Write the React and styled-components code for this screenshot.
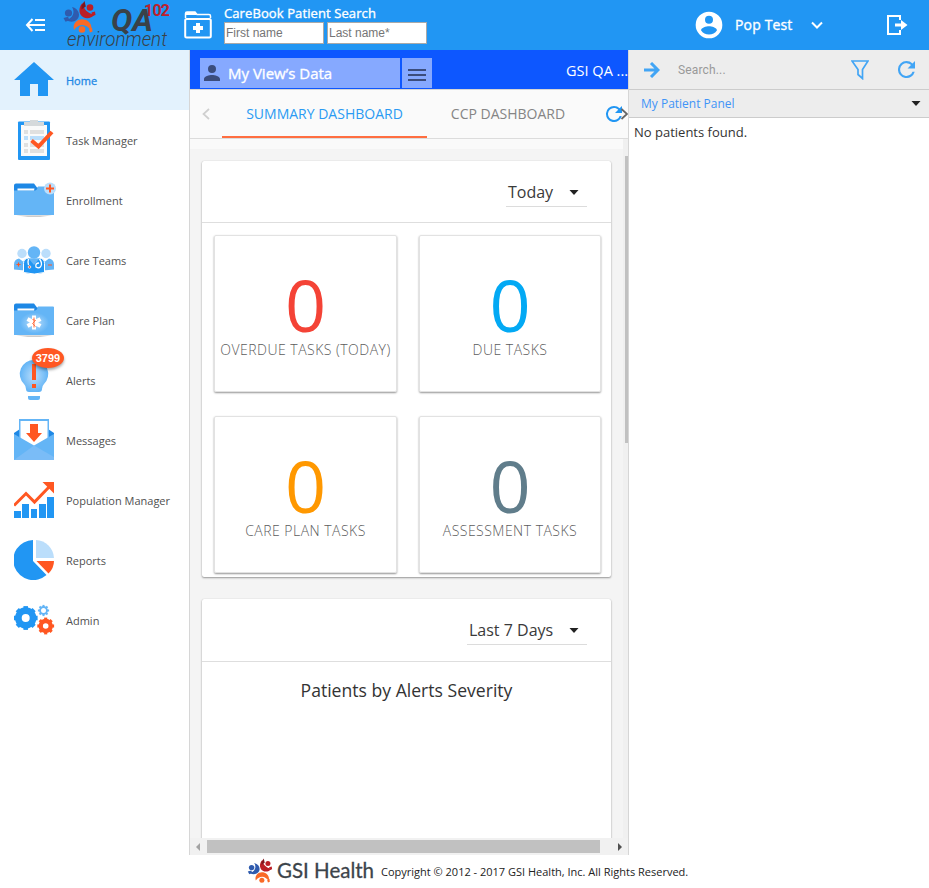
import React from 'react';
import styled, { createGlobalStyle } from 'styled-components';

const Global = createGlobalStyle`
  * { box-sizing: border-box; }
  body { margin: 0; background: #fff; font-family: "Open Sans", "Noto Sans", sans-serif; color: #333; }
  svg { display: block; flex: none; }
`;

const Page = styled.div`
  width: 929px;
  height: 888px;
  display: flex;
  flex-direction: column;
  overflow: hidden;
  white-space: nowrap;
`;

/* Header */
const Header = styled.header`
  height: 50px;
  flex: none;
  background: #2196f3;
  color: #fff;
  display: flex;
  align-items: center;
`;
const BackIcon = styled.svg`
  margin-left: 25px;
`;
const EnvLogo = styled.svg`
  margin-left: 17px;
`;
const FolderIcon = styled.svg`
  margin-left: 9px;
`;
const SearchBlock = styled.div`
  margin-left: 12px;
  height: 50px;
  padding-top: 5px;
`;
const SearchTitle = styled.div`
  font-size: 13px;
  -webkit-text-stroke: 0.35px currentColor;
  letter-spacing: 0.1px;
  line-height: 17px;
`;
const Fields = styled.div`
  display: flex;
  gap: 3px;
`;
const Field = styled.input`
  width: 100px;
  height: 22px;
  margin: 0;
  padding: 0 1px;
  border: 1px solid #a9a9a9;
  border-radius: 0;
  background: #fff;
  font: 12px "Liberation Sans", Arial, sans-serif;
  outline: none;
  &::placeholder { color: #757575; opacity: 1; }
`;
const UserMenu = styled.div`
  margin-left: auto;
  margin-right: 63px;
  display: flex;
  align-items: center;
  font-size: 14px;
  -webkit-text-stroke: 0.35px currentColor;
`;
const UserName = styled.span`
  width: 75px;
  margin-left: 12px;
  padding-bottom: 1px;
  letter-spacing: 0.15px;
`;
const LogoutIcon = styled.svg`
  margin-right: 21px;
`;

/* Body columns */
const Body = styled.div`
  height: 805px;
  flex: none;
  display: flex;
`;
const Sidebar = styled.nav`
  width: 190px;
  flex: none;
  border-right: 1px solid #d6d6d6;
`;
const NavItem = styled.div`
  height: 60px;
  padding-left: 14px;
  display: flex;
  align-items: center;
  gap: 12px;
  background: ${(p) => (p.$active ? '#e3f2fd' : '#fff')};
  color: ${(p) => (p.$active ? '#1e88e5' : '#505050')};
  font-size: 11px;
`;
const NavLabel = styled.span`
  padding-top: 1px;
  -webkit-text-stroke: ${(p) => (p.$active ? '0.3px currentColor' : '0')};
`;
const IconHolder = styled.div`
  position: relative;
  width: 40px;
  height: 44px;
`;
const Badge = styled.div`
  position: absolute;
  left: 18px;
  top: -10px;
  width: 32px;
  height: 20px;
  border-radius: 50%;
  background: #ff5722;
  color: #fff;
  font: bold 11px/20px "Liberation Sans", Arial, sans-serif;
  text-align: center;
  box-shadow: 0 2px 3px rgba(0, 0, 0, 0.35);
`;

/* Dashboard column */
const Main = styled.main`
  width: 439px;
  flex: none;
  border-right: 1px solid #d6d6d6;
  display: flex;
  flex-direction: column;
  background: #f4f4f4;
`;
const ViewBar = styled.div`
  height: 40px;
  flex: none;
  padding: 8px 0 0 10px;
  background: #0d57ff;
  border-bottom: 1px solid #d6d6d6;
  display: flex;
  align-items: flex-start;
  color: #fff;
`;
const ViewButton = styled.div`
  width: ${(p) => p.$w}px;
  height: 30px;
  margin-right: 2px;
  padding-left: ${(p) => p.$pad}px;
  background: #86a9ff;
  display: flex;
  align-items: center;
  font-size: 15px;
  -webkit-text-stroke: 0.35px currentColor;
  gap: 8px;
`;
const OrgName = styled.div`
  margin-left: auto;
  font-size: 14.5px;
  line-height: 26px;
`;
const Tabs = styled.div`
  height: 49px;
  flex: none;
  padding-left: 12px;
  display: flex;
  background: #fafafa;
  border-bottom: 1px solid #dcdcdc;
  align-items: center;
`;
const Tab = styled.div`
  height: 48px;
  width: ${(p) => p.$w}px;
  line-height: 48px;
  text-align: center;
  font-size: 14px;
  color: ${(p) => (p.$active ? '#2b9af3' : '#858585')};
  border-bottom: ${(p) => (p.$active ? '2px solid #ff6e40' : '0')};
`;
const Scroller = styled.div`
  height: 699px;
  display: flex;
`;
const Content = styled.div`
  width: 433px;
  overflow: hidden;
  border-top: 10px solid #fafafa;
  padding: 12px 12px 0;
`;
const VTrack = styled.div`
  width: 5px;
  background: #f0f0f0;
  padding: 17px 0 0 2px;
`;
const VThumb = styled.div`
  height: 287px;
  background: #c1c1c1;
`;
const HTrack = styled.div`
  height: 17px;
  flex: none;
  background: #f1f1f1;
  display: flex;
  align-items: center;
  padding: 0 6px 0 6px;
`;
const HThumb = styled.div`
  width: 393px;
  height: 13px;
  margin: 0 auto 0 7px;
  background: #c1c1c1;
`;
const Panel = styled.section`
  width: 409px;
  height: 416px;
  margin-bottom: 22px;
  background: #fff;
  border-radius: 2px;
  box-shadow: 0 1px 2px rgba(0, 0, 0, 0.38), 0 0 1px rgba(0, 0, 0, 0.18);
`;
const PanelHead = styled.div`
  height: ${(p) => p.$h}px;
  padding: 18px 24px 0 0;
  border-bottom: 1px solid #dedede;
  display: flex;
  justify-content: flex-end;
`;
const Select = styled.div`
  width: ${(p) => p.$w}px;
  height: 28px;
  padding: 0 8px 2px 2px;
  border-bottom: 1px solid #dcdcdc;
  display: flex;
  align-items: center;
  justify-content: space-between;
  font-size: 16px;
  color: #3a3a3a;
`;
const SelectCaret = styled.svg`
  margin-top: 2px;
`;
const Tiles = styled.div`
  padding: 12px 10px 0 12px;
  display: grid;
  grid-template-columns: 183px 182px;
  column-gap: 22px;
  row-gap: 24px;
`;
const Tile = styled.div`
  height: 157px;
  padding-top: 33px;
  border-radius: 2px;
  border: 1px solid #e2e2e2;
  box-shadow: 0 1px 2px rgba(0, 0, 0, 0.42);
  text-align: center;
`;
const Count = styled.div`
  height: 71px;
  font-size: 72px;
  line-height: 71px;
  color: ${(p) => p.$color};
`;
const Caption = styled.div`
  font-size: 14px;
  line-height: 20px;
  font-weight: 300;
  letter-spacing: 0.48px;
  color: #5c5c5c;
`;
const ChartTitle = styled.div`
  padding-top: 15px;
  text-align: center;
  font-size: 17.6px;
  line-height: 26px;
  color: #333;
`;

/* Patient column */
const Patients = styled.aside`
  flex: 1;
  font-size: 13px;
`;
const PatientSearch = styled.div`
  height: 40px;
  padding: 0 14px 0 15px;
  background: #ededed;
  border-bottom: 1px solid #ccc;
  display: flex;
  align-items: center;
`;
const Placeholder = styled.span`
  margin: 0 auto 0 18px;
  color: #999;
  font: 12px Roboto, sans-serif;
  letter-spacing: 0.15px;
`;
const FilterIcon = styled.svg`
  margin-right: 29px;
`;
const PatientHead = styled.div`
  height: 28px;
  padding: 0 8px 0 12px;
  background: #ededed;
  border-bottom: 1px solid #ccc;
  display: flex;
  align-items: center;
  justify-content: space-between;
  font-size: 12px;
  color: #4094f7;
`;
const Empty = styled.div`
  padding: 5px;
  line-height: 19px;
`;

const Footer = styled.footer`
  height: 33px;
  padding-left: 247px;
  display: flex;
  align-items: center;
  font-size: 11px;
  color: #222;
`;
const Copyright = styled.span`
  margin-left: 6px;
`;

const People = () => (
  <>
    <g fill="#2f5bae">
      <circle cx="5" cy="12" r="3.600" />
      <path d="M8.500 6C15.500 7.500 17.500 15 13.500 18.500C10 21.500 6 21 3 19C9 17.500 12 11.500 8.500 6Z" />
      <path d="M0 17l4.500-1.300 1.500 3.500-4 1.500z" />
    </g>
    <g fill="#bb1f26">
      <circle cx="26.500" cy="6.500" r="3.300" />
      <path d="M19 2C20 8 24 12.500 31 13.500C27 19 19.500 18 17 13.500C15 10 16 5 19 2Z" />
      <path d="M21 0L18 4.500V8.500L22.300 5.500Z" fill="#80151c" />
      <path d="M28 11.500l3.500-1 .5 3.500-3 1z" />
    </g>
    <g fill="#f96a26">
      <circle cx="18.500" cy="28.500" r="3.300" />
      <path d="M10.500 29C8.500 21 15.500 16.500 22 18.700C26.500 20.500 29 24.500 27.500 30C23.500 23 16 21.500 10.500 29Z" />
      <path d="M25.500 28.500l3-2 .5 4-2.500 1z" />
    </g>
  </>
);

const caretShape = <path d="M.5 0h9L5 5z" fill="#222" />;

const Reload = ({ size, color = '#42a5f5' }) => (
  <svg width={size} height={size} viewBox="4 4 16 16">
    <path fill={color} d="M17.650 6.350A7.960 7.960 0 0 0 12 4a8 8 0 1 0 7.730 10h-2.080A6 6 0 1 1 12 6c1.660 0 3.140.69 4.220 1.780L13 11h7V4z" />
  </svg>
);

const Folder = () => (
  <>
    <path d="M0 9V6Q0 4 2 4H20L23 8H40V20H0Z" fill="#1e88e5" />
    <path d="M0 11H21Q23 11 24 7H39Q40 7 40 8V35.500H0Z" fill="#64b5f6" />
    <path d="M3.500 9h17l-.5 2H3.500z" fill="#fff" />
    <path d="M2 36h36l-12 1.300H14z" fill="#bbb" />
  </>
);

const gear = (cx, cy, r, inner, color) => (
  <g transform={`translate(${cx} ${cy})`}>
    <circle r={(r + inner) / 2 - 0.3} fill="none" stroke={color} strokeWidth={r - inner - 0.6} />
    {[...Array(8)].map((_, i) => (
      <rect key={i} x={-r * 0.2} y={-r - 0.6} width={r * 0.4} height={2.5} fill={color} transform={`rotate(${i * 45})`} />
    ))}
  </g>
);

const icons = {
  home: <path d="M20 4L40 22H34V38H24V26H16V38H6V22H0Z" fill="#2196f3" />,
  task: (
    <>
      <rect x="4" y="3.500" width="32" height="38.500" rx="1" fill="#2196f3" />
      <path d="M7 7h26v31H7z" fill="#fafafa" />
      <path d="M10 4h6V2h8v2h6v4H10z" fill="#d5d9db" />
      <path d="M10 12h4v4h-4zM16 12h14v4H16zM10 25h4v4h-4zM16 25h14v4H16zM10 31h4v4h-4zM16 31h14v4H16z" fill="#e0e0e0" />
      <path d="M10 18h4v4h-4zM16 18h14v4H16z" fill="#bbdefb" />
      <path d="M17.500 22.500L24.500 28.500L38 14" fill="none" stroke="#ff5722" strokeWidth="4" />
    </>
  ),
  enroll: (
    <g transform="translate(0 1.500)">
      <Folder />
      <circle cx="36" cy="9" r="6" fill="#bbdefb" />
      <path d="M32 9h8M36 5v8" stroke="#ff5722" strokeWidth="2" />
    </g>
  ),
  teams: (
    <g transform="translate(0 1.500)">
      <circle cx="8" cy="14" r="4.700" fill="#bbdefb" />
      <circle cx="32" cy="14" r="4.700" fill="#bbdefb" />
      <path d="M0 30v-5q0-5 5-6l4 3 2-2v11zM40 30v-5q0-5-5-6l-4 3-2-2v11z" fill="#64b5f6" />
      <path d="M2.500 25h4M4.500 23v4M34 25.500h4" stroke="#ff5722" strokeWidth="1.200" />
      <path d="M9.500 33V24q0-5 5-5.500h11q5 .5 5 5.500V33q-10 3-21 0Z" fill="#2196f3" stroke="#fff" strokeWidth="1" />
      <circle cx="20" cy="13" r="6.200" fill="#64b5f6" />
      <path d="M15 19.500h10l-5 6z" fill="#64b5f6" />
      <path d="M14.500 19.500q-1 3 0 6M25.500 19.500q3 4 1.500 7t-5 1q-1-4 3-4" fill="none" stroke="#fff" strokeWidth="1.300" />
      <circle cx="15.500" cy="27.500" r="1.300" fill="#ff5722" stroke="#fff" strokeWidth=".7" />
    </g>
  ),
  care: (
    <g transform="translate(0 1.500)">
      <defs><radialGradient id="careGlow"><stop stopColor="#bbdefb" /><stop offset="1" stopColor="#64b5f6" /></radialGradient></defs>
      <Folder />
      <path d="M6 13h29v21H6z" fill="url(#careGlow)" />
      <path d="M20 16v14M13.500 19.500l13 7M13.500 26.500l13-7" stroke="#fff" strokeWidth="4" />
      <path d="M20 18v10M18.500 20l3 1-3 3 3 3" fill="none" stroke="#ff7043" strokeWidth="1" />
    </g>
  ),
  alerts: (
    <>
      <defs><radialGradient id="bulbGlow"><stop stopColor="#bbdefb" /><stop offset="1" stopColor="#64b5f6" /></radialGradient></defs>
      <path d="M20 2A14 14 0 0 0 10 26Q12 28 12 31Q12 34 15 34H25Q28 34 28 31Q28 28 30 26A14 14 0 0 0 20 2Z" fill="url(#bulbGlow)" />
      <path d="M14 38h12v2q0 2-2 2h-8q-2 0-2-2z" fill="#64b5f6" />
      <path d="M18 6h4v16h-4zM18 26h4v4h-4z" fill="#ff5722" />
    </>
  ),
  messages: (
    <>
      <path d="M0 15L6 11V22H0ZM40 15L34 11V22H40Z" fill="#1e88e5" />
      <path d="M5 1h30v25L20 32 5 24z" fill="#64b5f6" />
      <path d="M6.500 3h27v23L20 31 6.500 24z" fill="#fff" />
      <path d="M0 16L20 27.500L40 16V42H0Z" fill="#64b5f6" />
      <path d="M0 42L20 27.500L40 39V42Z" fill="#7abcf7" />
      <path d="M16 6h8v9h4l-8 9-8-9h4z" fill="#ff5722" />
    </>
  ),
  population: (
    <>
      <path d="M0 33h7v7H0zM8 26h7v14H8zM17 31h6v9h-6zM25 26h7v14h-7zM33 19h7v21h-7z" fill="#2196f3" />
      <path d="M0 27.500L12 15.500L20.500 24L36 8" fill="none" stroke="#ff5722" strokeWidth="3" />
      <path d="M28.500 4H40V15.500Z" fill="#ff5722" />
    </>
  ),
  reports: (
    <>
      <path d="M19 2A20 20 0 1 0 32.500 37L19 23Z" fill="#2196f3" />
      <path d="M22 2A19 19 0 0 1 40 20H22Z" fill="#bbdefb" />
      <path d="M22.500 23H40Q40 30 34.500 35.500Z" fill="#ff5722" />
    </>
  ),
  admin: (
    <>
      {gear(11.7, 20, 11.3, 4, '#2196f3')}
      {gear(29.5, 12.5, 5, 2.5, '#64b5f6')}
      {gear(31.7, 28, 7.8, 2.8, '#ff5722')}
    </>
  ),
};

const nav = [
  ['home', 'Home'], ['task', 'Task Manager'], ['enroll', 'Enrollment'], ['teams', 'Care Teams'],
  ['care', 'Care Plan'], ['alerts', 'Alerts'], ['messages', 'Messages'],
  ['population', 'Population Manager'], ['reports', 'Reports'], ['admin', 'Admin'],
];

const tiles = [
  ['OVERDUE TASKS (TODAY)', '#f44336'], ['DUE TASKS', '#03a9f4'],
  ['CARE PLAN TASKS', '#ff9800'], ['ASSESSMENT TASKS', '#607d8b'],
];

export default function App() {
  return (
    <Page>
      <Global />
      <Header>
        <BackIcon width="21" height="14" viewBox="0 0 21 14" fill="none" stroke="#fff" strokeWidth="2">
          <path d="M7.500 1L2 7l5.500 6M2 7h18M10 2h10M10 12h10" />
        </BackIcon>
        <EnvLogo width="112" height="50" viewBox="63 0 112 50">
          <g transform="translate(63.500 1)"><People /></g>
          <g fontFamily="Roboto, sans-serif" fill="#3a4147">
            <text x="111" y="31" fontSize="31.500" fontWeight="700" fontStyle="italic" textLength="42" lengthAdjust="spacingAndGlyphs">QA</text>
            <text x="67" y="46" fontSize="20" fontWeight="300" fontStyle="italic" textLength="100" lengthAdjust="spacingAndGlyphs">environment</text>
            <text x="144" y="15.500" fontSize="16" fontWeight="700" fill="#bd202e" textLength="26">102</text>
          </g>
        </EnvLogo>
        <FolderIcon width="28" height="28" viewBox="0 0 28 28">
          <path d="M1.500 7V2.500Q1.500 1 3 1H11L13 3.500H25Q26.500 3.500 26.500 5V7" fill="none" stroke="#fff" strokeWidth="1.500" />
          <path d="M2 1h9l2 3H2z" fill="#fff" />
          <rect x="1.200" y="8" width="25.600" height="18.600" rx="1.500" fill="none" stroke="#fff" strokeWidth="2" />
          <path d="M9 17h10M14 12v10" stroke="#fff" strokeWidth="4" />
        </FolderIcon>
        <SearchBlock>
          <SearchTitle>CareBook Patient Search</SearchTitle>
          <Fields><Field placeholder="First name" /><Field placeholder="Last name*" /></Fields>
        </SearchBlock>
        <UserMenu>
          <svg width="28" height="28" viewBox="1.500 1.500 21 21" fill="#fff">
            <path d="M12 2a10 10 0 1 0 0 20 10 10 0 0 0 0-20zm0 3a3 3 0 1 1 0 6 3 3 0 0 1 0-6zm0 14.200a7.200 7.200 0 0 1-6-3.220c.03-1.990 4-3.080 6-3.080s5.970 1.090 6 3.080a7.200 7.200 0 0 1-6 3.220z" />
          </svg>
          <UserName>Pop Test</UserName>
          <svg width="14" height="9" viewBox="0 0 14 9"><path d="M2 1.500l5 5 5-5" fill="none" stroke="#fff" strokeWidth="2" /></svg>
        </UserMenu>
        <LogoutIcon width="21" height="20" viewBox="0 0 21 20">
          <path d="M13 5V1H1v18h12v-4" fill="none" stroke="#fff" strokeWidth="2" />
          <path d="M8 8.500h6V5l6.500 5-6.500 5v-3.500H8z" fill="#fff" />
        </LogoutIcon>
      </Header>
      <Body>
        <Sidebar>
          {nav.map(([id, label]) => (
            <NavItem key={id} $active={id === 'home'}>
              <IconHolder>
                <svg width="42" height="44" viewBox="0 0 42 44">{icons[id]}</svg>
                {id === 'alerts' && <Badge>3799</Badge>}
              </IconHolder>
              <NavLabel $active={id === 'home'}>{label}</NavLabel>
            </NavItem>
          ))}
        </Sidebar>
        <Main>
          <ViewBar>
            <ViewButton $w={200} $pad={4}>
              <svg width="16" height="16" viewBox="4 4 16 16"><path fill="#3b4d7d" d="M12 12a4 4 0 1 0 0-8 4 4 0 0 0 0 8zm0 2c-2.670 0-8 1.340-8 4v2h16v-2c0-2.660-5.330-4-8-4z" /></svg>
              My View’s Data
            </ViewButton>
            <ViewButton $w={30} $pad={6}>
              <svg width="18" height="16" viewBox="0 0 18 16"><path d="M0 5h18M0 10h18M0 15h18" stroke="#3b4d7d" strokeWidth="2" /></svg>
            </ViewButton>
            <OrgName>GSI QA ...</OrgName>
          </ViewBar>
          <Tabs>
            <svg width="20" height="12" viewBox="0 0 20 12"><path d="M7 1L1.500 6 7 11" fill="none" stroke="#cfcfcf" strokeWidth="1.700" /></svg>
            <Tab $active $w={205}>SUMMARY DASHBOARD</Tab>
            <Tab $w={162}>CCP DASHBOARD</Tab>
            <svg width="39" height="16" viewBox="0 0 39 16">
              <path transform="translate(13 -4)" fill="#2196f3" d="M17.650 6.350A7.960 7.960 0 0 0 12 4a8 8 0 1 0 7.730 10h-2.080A6 6 0 1 1 12 6c1.660 0 3.140.69 4.220 1.780L13 11h7V4z" />
              <path d="M32.500 3L38 8l-5.500 5" fill="none" stroke="#666" strokeWidth="1.800" />
            </svg>
          </Tabs>
          <Scroller>
            <Content>
              <Panel>
                <PanelHead $h={62}>
                  <Select $w={81}>Today<SelectCaret width="10" height="5" viewBox="0 0 10 5">{caretShape}</SelectCaret></Select>
                </PanelHead>
                <Tiles>
                  {tiles.map(([label, color]) => (
                    <Tile key={label}><Count $color={color}>0</Count><Caption>{label}</Caption></Tile>
                  ))}
                </Tiles>
              </Panel>
              <Panel>
                <PanelHead $h={63}>
                  <Select $w={120}>Last 7 Days<SelectCaret width="10" height="5" viewBox="0 0 10 5">{caretShape}</SelectCaret></Select>
                </PanelHead>
                <ChartTitle>Patients by Alerts Severity</ChartTitle>
              </Panel>
            </Content>
            <VTrack><VThumb /></VTrack>
          </Scroller>
          <HTrack>
            <svg width="4" height="8" viewBox="0 0 4 8"><path d="M4 0v8L0 4z" fill="#a3a3a3" /></svg>
            <HThumb />
            <svg width="4" height="8" viewBox="0 0 4 8"><path d="M0 0v8l4-4z" fill="#505050" /></svg>
          </HTrack>
        </Main>
        <Patients>
          <PatientSearch>
            <svg width="16" height="16" viewBox="0 0 16 16"><path d="M0 8h14M7 1l7 7-7 7" fill="none" stroke="#42a5f5" strokeWidth="3" /></svg>
            <Placeholder>Search...</Placeholder>
            <FilterIcon width="18" height="20" viewBox="0 0 18 20"><path d="M1 1h16l-5.500 8.500V18.500L7 14.500V9.500z" fill="none" stroke="#42a5f5" strokeWidth="1.700" /></FilterIcon>
            <Reload size={17} />
          </PatientSearch>
          <PatientHead>My Patient Panel<svg width="10" height="5" viewBox="0 0 10 5">{caretShape}</svg></PatientHead>
          <Empty>No patients found.</Empty>
        </Patients>
      </Body>
      <Footer>
        <svg width="128" height="28" viewBox="0 0 128 28">
          <g transform="translate(.8 .5) scale(.76)"><People /></g>
          <text x="30" y="20" fontFamily="Lato, sans-serif" fontSize="21" fill="#3c444a" stroke="#3c444a" strokeWidth=".3" textLength="97" lengthAdjust="spacingAndGlyphs">GSI Health</text>
        </svg>
        <Copyright>Copyright © 2012 - 2017 GSI Health, Inc. All Rights Reserved.</Copyright>
      </Footer>
    </Page>
  );
}
